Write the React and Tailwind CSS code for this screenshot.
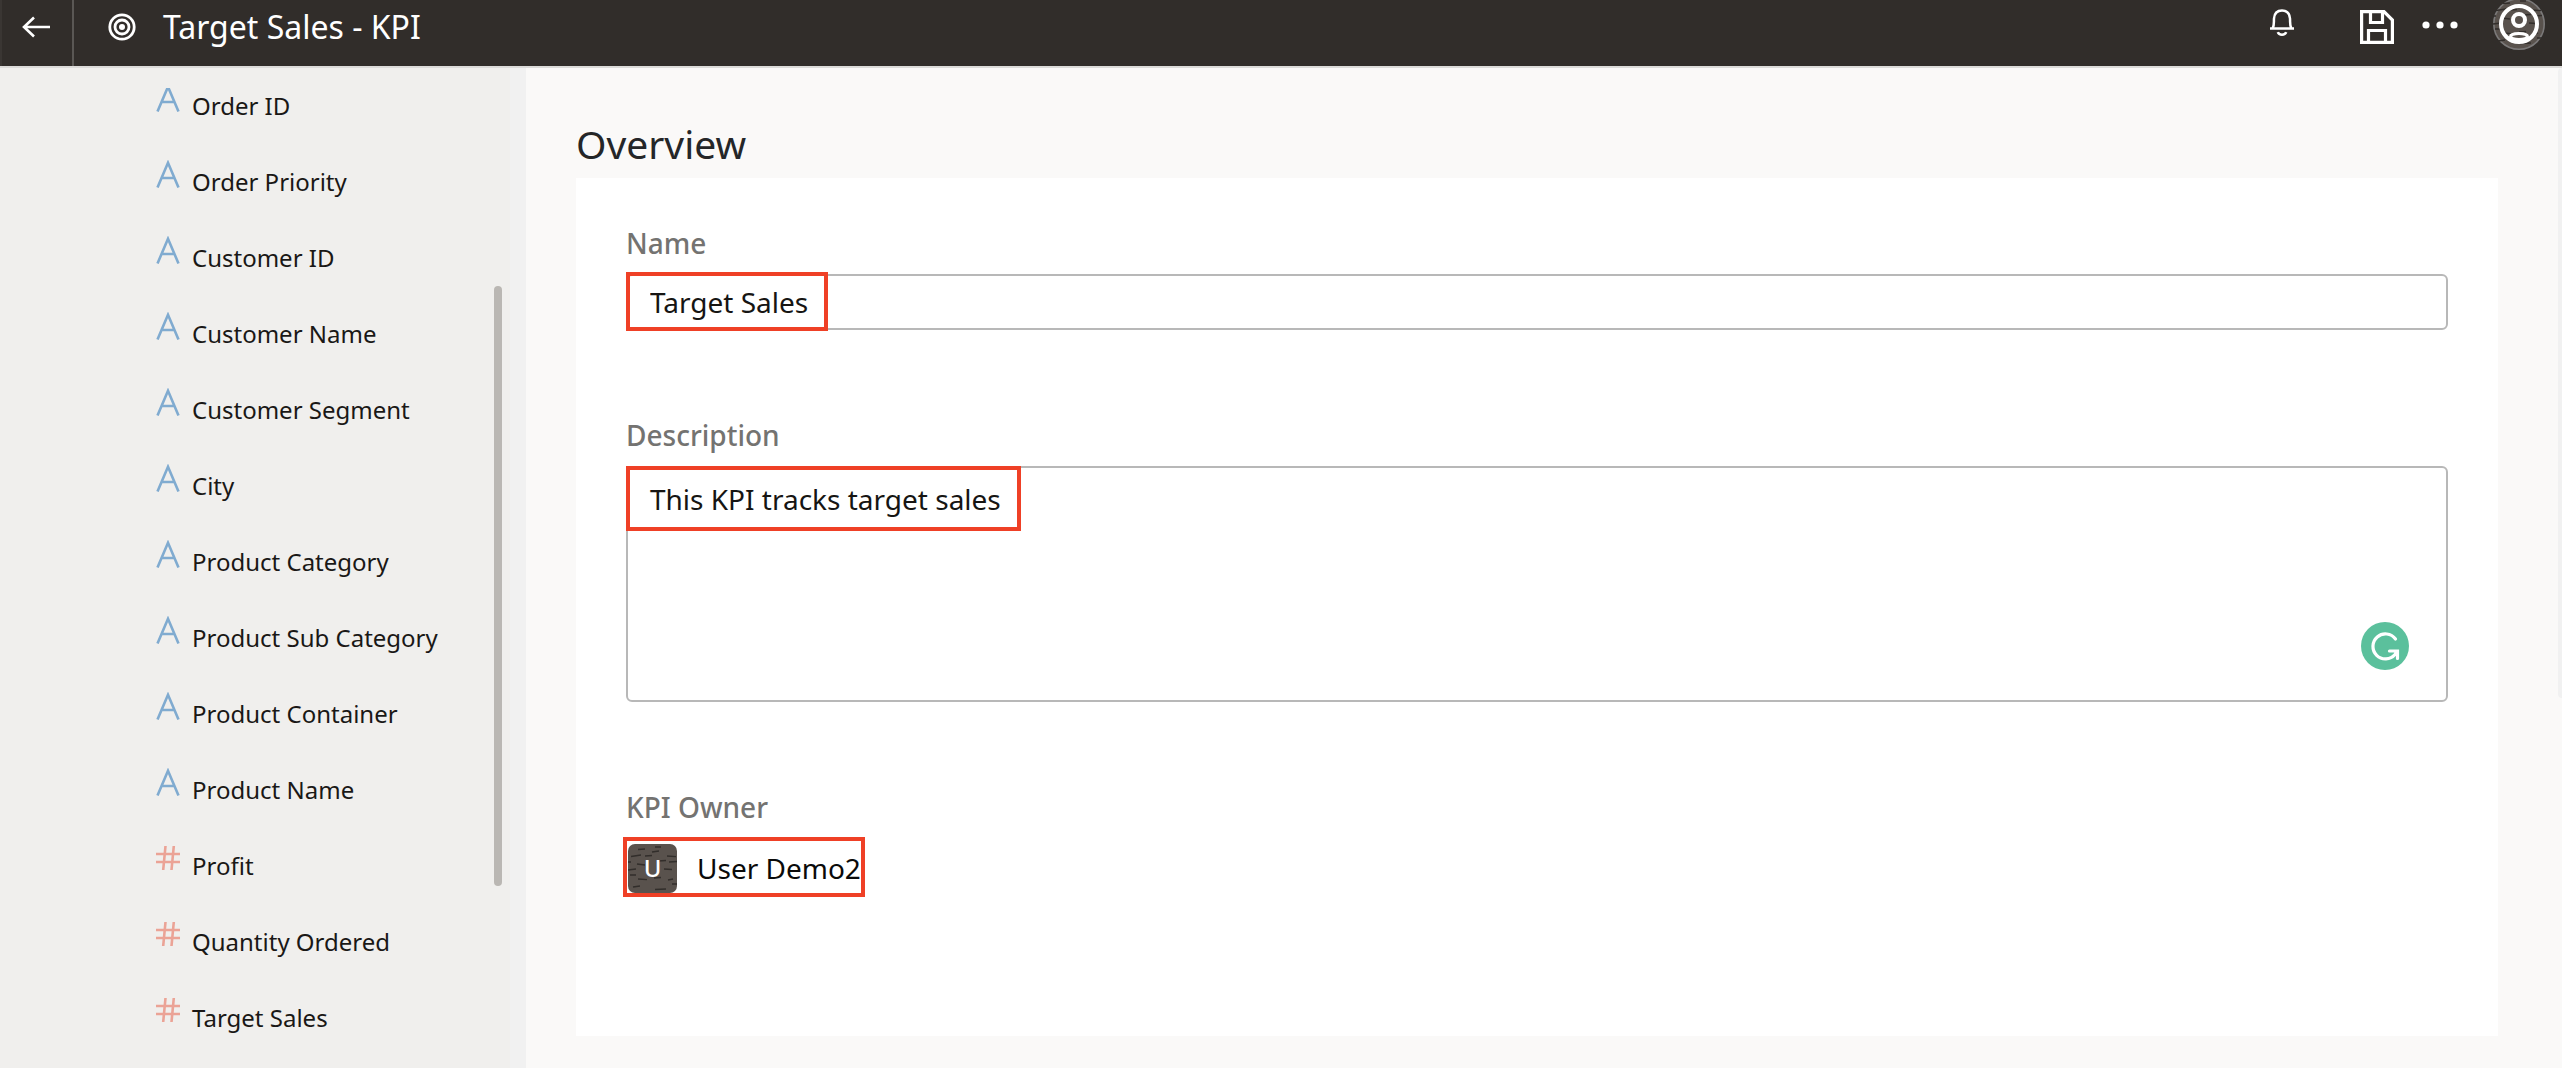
import React from "react";

const fields = [
  ["Order ID", "text"],
  ["Order Priority", "text"],
  ["Customer ID", "text"],
  ["Customer Name", "text"],
  ["Customer Segment", "text"],
  ["City", "text"],
  ["Product Category", "text"],
  ["Product Sub Category", "text"],
  ["Product Container", "text"],
  ["Product Name", "text"],
  ["Profit", "number"],
  ["Quantity Ordered", "number"],
  ["Target Sales", "number"],
];

function AttributeIcon() {
  return (
    <svg className="h-7 w-6 shrink-0" viewBox="0 0 24 28" fill="none" stroke="#80abd0" strokeWidth="2.6" aria-hidden="true">
      <path d="M1.500 27.500 12 2.800 22.500 27.500M5 18h14" />
    </svg>
  );
}

function MeasureIcon() {
  return (
    <svg className="h-7 w-6 shrink-0" viewBox="0 0 24 28" fill="none" stroke="#eba396" strokeWidth="2.6" aria-hidden="true">
      <path d="M9.500 2 7.200 26M17.800 2l-2.300 24M0 10h24M0 18h24" />
    </svg>
  );
}

function Texture() {
  return (
    <path
      d="M10 5.5l7-.5M27 3h6M24 8l7-1M3 12.500l10-1.500M17 12l7-.5M39 12l9 .6M0 18h3M9 20l8 1M30 17l8-.5M41 18l8-.5M0 26l8-1M36 25l8 .5M2 31h6M10 35l9 .6M26 34l7-.5M44 40h5M5 43l7-1M27 45.500l11-.5M40 36l5-1"
      stroke="#322e2b"
      strokeWidth="1.3"
      fill="none"
    />
  );
}

function Header() {
  return (
    <header className="flex h-17 shrink-0 border-b-2 border-[#dcdbd9] bg-[#312d2a] text-white">
      <button aria-label="Back" className="flex w-[74px] justify-center border-x-2 border-r-[#5a5754] border-l-[#3a3633] pt-3 pr-0.5">
        <svg className="h-7 w-7" viewBox="0 0 28 28" fill="none" stroke="currentColor" strokeWidth="2.6" aria-hidden="true">
          <path d="M12 5.500 2 15 12 24.500M2 15h26" />
        </svg>
      </button>
      <div className="flex grow gap-[27px] pl-[34px]">
        <svg className="mt-[13px] h-7 w-7" viewBox="0 0 28 28" fill="none" stroke="currentColor" strokeWidth="2.8" aria-hidden="true">
          <circle cx="14" cy="14" r="12.200" />
          <circle cx="14" cy="14" r="7" />
          <circle cx="14" cy="14" r="3" fill="currentColor" stroke="none" />
        </svg>
        <h1 className="pt-[7px] text-[32px] leading-10">Target Sales - KPI</h1>
      </div>
      <div className="flex items-start pr-[17px]">
        <button aria-label="Notifications" className="mr-[66px] pt-[9px]">
          <svg className="h-7 w-6" viewBox="0 0 24 28" fill="none" stroke="currentColor" strokeWidth="2.500" aria-hidden="true">
            <path d="M0 19.600h24M2.600 19.500C4.500 16 3.700 12.500 4 9.500 4.400 4.500 7.500 1.500 12 1.500s7.600 3 8 8c.3 3-.5 6.500 1.400 10M7.800 23.200c1.200 3.400 7.200 3.400 8.400 0" />
          </svg>
        </button>
        <button aria-label="Save" className="mr-7 pt-[10px]">
          <svg className="h-[34px] w-[34px]" viewBox="0 0 34 34" fill="none" stroke="currentColor" strokeWidth="3.2" aria-hidden="true">
            <path d="M1.600 1.600h22.400L32.400 10v22.400h-30.800zM10.500 2v10.500h12V2M8.500 32V20.500h17V32" />
          </svg>
        </button>
        <button aria-label="More actions" className="mr-[35px] pt-[21px]">
          <svg className="h-2 w-9" viewBox="0 0 36 8" fill="currentColor" aria-hidden="true">
            <circle cx="4" cy="4" r="3.600" />
            <circle cx="18" cy="4" r="3.600" />
            <circle cx="32" cy="4" r="3.600" />
          </svg>
        </button>
        <button aria-label="Account" className="h-[50px] overflow-hidden">
          <svg className="h-[50px] w-[52px]" viewBox="0 2 52 50" fill="none" aria-hidden="true">
            <circle cx="26" cy="26" r="25.200" fill="#59524d" stroke="#7b7979" strokeWidth="1.600" />
            <Texture />
            <circle cx="26" cy="26" r="18" stroke="white" strokeWidth="4" />
            <circle cx="26" cy="22" r="6" stroke="white" strokeWidth="4" />
            <ellipse cx="26" cy="38.500" rx="8.500" ry="3" stroke="white" strokeWidth="3" />
          </svg>
        </button>
      </div>
    </header>
  );
}

function Sidebar() {
  return (
    <aside className="relative w-[526px] shrink-0 overflow-hidden border-r-[16px] border-[#f1f1f1] bg-[#f0efed]">
      <ul className="mt-5 overflow-hidden">
        {fields.map(([name, kind]) => (
          <li key={name} className="flex h-19 items-start gap-3 pl-39 pt-4 first:-mt-5">
            {kind === "text" ? <AttributeIcon /> : <MeasureIcon />}
            <span className="pt-1.5 text-2xl leading-8 text-[#1a1816]">{name}</span>
          </li>
        ))}
      </ul>
      <div className="absolute top-[218px] right-2 h-[600px] w-2 rounded-full bg-[#bab7b3]" />
    </aside>
  );
}

function Highlight({ className }) {
  return <div className={"pointer-events-none absolute border-4 border-[#ef4026] " + className} />;
}

const labelClass = "block text-[28px] leading-9 font-medium text-[#747371]";

function Overview() {
  return (
    <main className="relative grow bg-[#faf9f8] pt-12 pr-16 pb-8 pl-[50px]">
      <h2 className="pb-1.5 text-[39px] leading-14 text-[#242628]">Overview</h2>
      <section className="min-h-[858px] bg-white px-[50px] pt-[47px]">
        <div className="relative">
          <label htmlFor="kpi-name" className={labelClass}>Name</label>
          <input
            id="kpi-name"
            defaultValue="Target Sales"
            className="mt-[13px] block h-14 w-full rounded-md border-2 border-[#b8b8b8] px-[22px] text-[28px] text-[#161513]"
          />
          <Highlight className="top-[47px] left-0 h-[59px] w-[202px]" />
        </div>
        <div className="relative mt-[87px]">
          <label htmlFor="kpi-description" className={labelClass}>Description</label>
          <textarea
            id="kpi-description"
            defaultValue="This KPI tracks target sales"
            className="mt-[13px] block h-[236px] w-full resize-none rounded-md border-2 border-[#b8b8b8] px-[22px] pt-[11px] text-[28px] leading-10 text-[#161513]"
          />
          <Highlight className="top-[49px] left-0 h-[65px] w-[395px]" />
          <svg className="absolute right-[39px] bottom-8 h-12 w-12" viewBox="0 0 48 48" fill="none" stroke="white" strokeWidth="3.2" strokeLinecap="round" aria-hidden="true">
            <circle cx="24" cy="24" r="24" fill="#5bc09c" stroke="none" />
            <path d="M34.500 17A12.500 12.500 0 1 0 34 32.500L36 29.500M28.500 29h8v7.500" />
          </svg>
        </div>
        <div className="relative mt-[87px]">
          <div className={labelClass}>KPI Owner</div>
          <div className="mt-[18px] flex h-[50px] items-center gap-5 pl-0.5">
            <svg className="h-[49px] w-[49px]" viewBox="0 0 49 49" aria-hidden="true">
              <rect width="49" height="49" rx="7" fill="#59524d" />
              <Texture />
              <text x="24.500" y="33" textAnchor="middle" fontSize="24" fontWeight="500" fill="white">U</text>
            </svg>
            <span className="text-[28px] leading-9 text-[#0a0a0a]">User Demo2</span>
          </div>
          <Highlight className="-left-[3px] top-12 h-[60px] w-[242px]" />
        </div>
      </section>
      <div className="absolute top-0 right-0 h-[630px] w-1 rounded-l-lg bg-[#f1f1f1]" />
    </main>
  );
}

export default function App() {
  return (
    <div className="flex min-h-screen flex-col font-['Noto_Sans',sans-serif]">
      <Header />
      <div className="flex grow">
        <Sidebar />
        <Overview />
      </div>
    </div>
  );
}
